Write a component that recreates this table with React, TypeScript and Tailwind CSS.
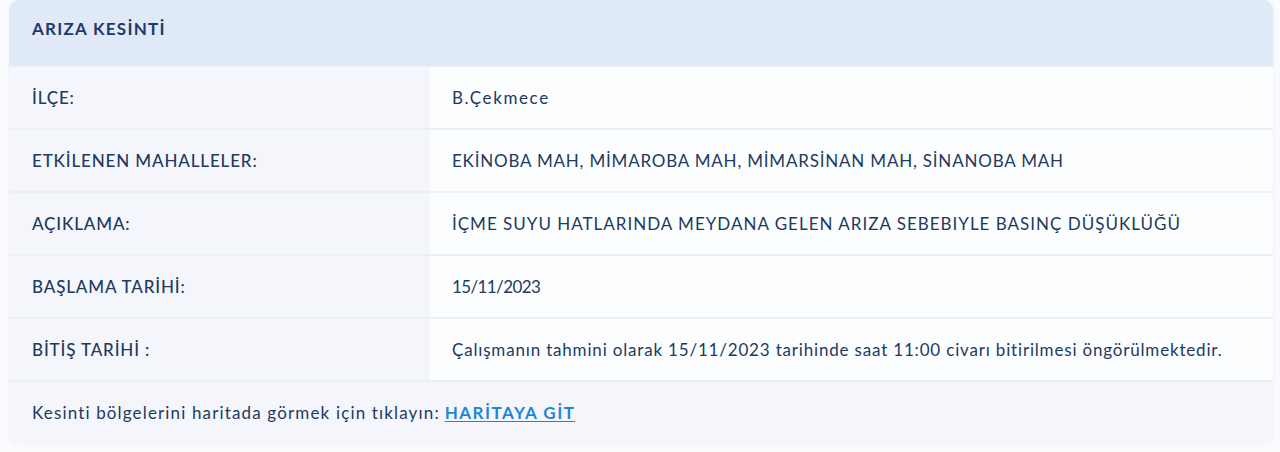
import React from "react";

const rows: { k: string; v: string; vt: string }[] = [
  { k: "İLÇE:", v: "B.Çekmece", vt: "tracking-[1.6px]" },
  { k: "ETKİLENEN MAHALLELER:", v: "EKİNOBA MAH, MİMAROBA MAH, MİMARSİNAN MAH, SİNANOBA MAH", vt: "tracking-[0.8px]" },
  { k: "AÇIKLAMA:", v: "İÇME SUYU HATLARINDA MEYDANA GELEN ARIZA SEBEBIYLE BASINÇ DÜŞÜKLÜĞÜ", vt: "tracking-[1px]" },
  { k: "BAŞLAMA TARİHİ:", v: "15/11/2023", vt: "tracking-[-0.6px]" },
  { k: "BİTİŞ TARİHİ :", v: "Çalışmanın tahmini olarak 15/11/2023 tarihinde saat 11:00 civarı bitirilmesi öngörülmektedir.", vt: "tracking-[0.82px]" },
];

export default function App() {
  return (
    <div
      className="w-[1280px] h-[452px] bg-[#fafbfd] overflow-hidden"
      style={{ fontFamily: "Lato, 'Noto Sans', sans-serif" }}
    >
      <div className="ml-[9px] w-[1264px] rounded-[10px] overflow-hidden bg-[#f4f6fb] shadow-[0_0_4px_rgba(30,58,95,0.06)]">
        <div className="h-[67px] bg-[#dfe9f8] flex items-center pb-[8px] px-[23px] text-[17px] tracking-[1.25px] font-bold text-[#1f3a68] border-b border-[#eef1f6]">
          ARIZA KESİNTİ
        </div>
        {rows.map(({ k, v, vt }) => (
          <div key={k} className="flex h-[63px] border-b-2 border-[#eceff4]">
            <div className="w-[421px] shrink-0 bg-[#f4f6fb] flex items-center pl-[23px] text-[17px] tracking-[0.85px] font-medium text-[#223a5e]">
              {k}
            </div>
            <div className={`flex-1 bg-[#fcfdfe] flex items-center pl-[22px] text-[17px] text-[#223a5e] ${vt}`}>
              {v}
            </div>
          </div>
        ))}
        <div className="h-[61px] flex items-center pl-[23px] text-[17px] text-[#223a5e]">
          <span className="tracking-[1.15px]">Kesinti bölgelerini haritada görmek için tıklayın:</span>
          <a className="ml-[5px] font-bold tracking-[1.45px] text-[#1d87d6] underline underline-offset-2">HARİTAYA GİT</a>
        </div>
      </div>
    </div>
  );
}
